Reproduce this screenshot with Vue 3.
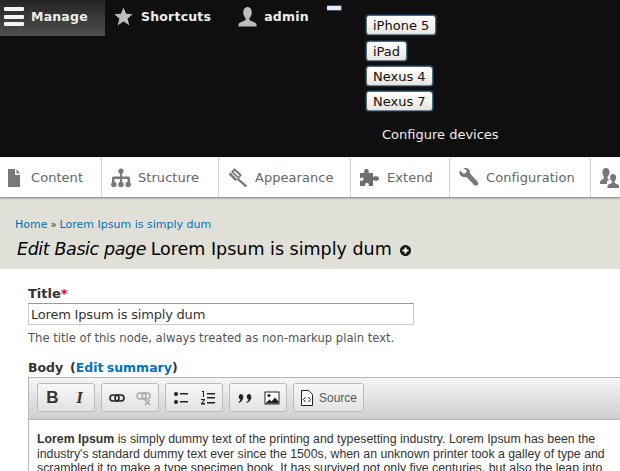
<script setup>
const devices = ['iPhone 5', 'iPad', 'Nexus 4', 'Nexus 7']
const tabs = [
  { label: 'Content', icon: 'content', width: 102 },
  { label: 'Structure', icon: 'structure', width: 117 },
  { label: 'Appearance', icon: 'appearance', width: 132 },
  { label: 'Extend', icon: 'extend', width: 99 },
  { label: 'Configuration', icon: 'config', width: 141 },
]
</script>

<template>
  <div class="page">
    <header class="topbar">
      <div class="bar-row">
        <a class="bar-item manage">
          <span class="burger"><i></i><i></i><i></i></span>
          Manage
        </a>
        <a class="bar-item shortcuts">
          <svg width="19" height="19" viewBox="0 0 20 20"><path fill="#bdbdbd" d="M10 .5l2.700 6.600 7 .5-5.400 4.500 1.800 7L10 15.300l-6.100 3.800 1.800-7L.3 7.600l7-.5z"/></svg>
          Shortcuts
        </a>
        <a class="bar-item admin">
          <svg width="19" height="20" viewBox="0 0 20 21"><path fill="#bdbdbd" d="M10 0c3 0 4.500 2.300 4.500 5.500 0 2.800-1.200 5-2.500 6.200v1.800c0 1 6 2.300 7.500 4.500v2.500H.5v-2.500c1.500-2.200 7.500-3.500 7.500-4.500v-1.800C6.700 10.500 5.500 8.300 5.500 5.500 5.500 2.300 7 0 10 0z"/></svg>
          admin
        </a>
        <span class="mini-btn"></span>
      </div>
      <div class="devices">
        <button v-for="d in devices" :key="d" class="device">{{ d }}</button>
        <a class="configure">Configure devices</a>
      </div>
    </header>

    <nav class="tabs">
      <a v-for="t in tabs" :key="t.label" class="tab" :class="'tab-' + t.icon" :style="{ width: t.width + 'px' }">
        <svg class="tab-icon" width="20" height="20" viewBox="0 0 20 20">
          <path v-if="t.icon === 'content'" fill="#787878" d="M4 1h7v6h5v12H4zM12.500 1l3.500 4.500h-3.500z"/>
          <g v-else-if="t.icon === 'structure'" fill="#787878">
            <circle cx="10" cy="3" r="2.600"/><circle cx="2.800" cy="16.500" r="2.700"/><circle cx="10" cy="16.500" r="2.700"/><circle cx="17.200" cy="16.500" r="2.700"/>
            <path d="M9 5h2v3.500h6.500A1.500 1.500 0 0 1 19 10v5h-2.500v-4H11v4H9v-4H3.500v4H1v-5a1.500 1.500 0 0 1 1.500-1.500H9z"/>
          </g>
          <g v-else-if="t.icon === 'appearance'" fill="#787878">
            <path d="M6.500 0L14 7l-3.500 4L3 4zM5.500 4l5 4.700 1-1.200-5-4.700z" fill-rule="evenodd"/>
            <path d="M2.500 4.500l7 7-2 1.500L.5 6.500zM10.500 10l8.500 7.500-1.500 1.700-8.500-7.500z"/>
          </g>
          <path v-else-if="t.icon === 'extend'" fill="#6e6e6e" d="M0 5h4.500C4 3.500 4 1 6.500 1S9 3.500 8.500 5H13v4c1.500-1.200 6-1.500 6 1.500S14.500 13.200 13 12v6H8.500c.8-1.500.5-3-1.500-3s-2.300 1.500-1.500 3H0v-5.500c1.500.8 3.500.5 3.500-1.500S1.500 9.300 0 10z"/>
          <path v-else-if="t.icon === 'config'" fill="#787878" d="M1 2.500l3.500 3.300 2.500-.8.800-2.500L4.500.2C8-1 11.500 1.500 11 5.500l7.500 8c1 1 1 2.500 0 3.500s-2.500 1-3.500 0L7.500 9C4 10-1.500 7 1 2.500z"/>
        </svg>
        {{ t.label }}
      </a>
      <a class="tab last">
        <svg width="20" height="20" viewBox="0 0 20 20"><path fill="#787878" d="M6 0c2.500 0 3.500 2 3.500 4S8.500 8 7.500 9v1.500l2 1L7 13v3H0v-2.500c1-1.500 4-2.500 4-3.500V9C3 8 2.500 6 2.500 4S3.500 0 6 0zM13 6c2.200 0 3.200 1.800 3.200 3.500s-.9 3.300-1.700 4v1c0 .8 3.500 1.500 4.500 3V20H7.500v-2.500c1-1.500 4.500-2.200 4.500-3v-1c-1-.7-2-2.300-2-4S11 6 13 6z"/></svg>
      </a>
    </nav>

    <section class="head">
      <div class="crumbs"><a>Home</a><span class="sep">»</span><a>Lorem Ipsum is simply dum</a></div>
      <h1><em>Edit Basic page</em> Lorem Ipsum is simply dum
        <svg class="plus" width="11" height="11" viewBox="0 0 11 11"><circle cx="5.500" cy="5.500" r="5.500" fill="#111"/><path fill="#fff" d="M4.500 2.500h2v2h2v2h-2v2h-2v-2h-2v-2h2z"/></svg>
      </h1>
    </section>

    <main class="form">
      <label class="label">Title<span class="req">*</span></label>
      <input class="title-input" value="Lorem Ipsum is simply dum" />
      <p class="help">The title of this node, always treated as non-markup plain text.</p>

      <div class="label body-label">Body &nbsp;(<a>Edit summary</a>)</div>
      <div class="editor">
        <div class="toolbar">
          <div class="group">
            <span class="tool glyph bold">B</span>
            <span class="tool glyph ital">I</span>
          </div>
          <div class="group">
            <span class="tool">
              <svg width="16" height="16" viewBox="0 0 16 16"><rect x="1" y="5" width="9" height="6" rx="3" fill="none" stroke="#222" stroke-width="1.600"/><rect x="6" y="5" width="9" height="6" rx="3" fill="none" stroke="#222" stroke-width="1.600"/></svg>
            </span>
            <span class="tool">
              <svg width="16" height="16" viewBox="0 0 16 16"><g fill="none" stroke="#aaa" stroke-width="1.500"><rect x="1" y="3" width="9" height="6" rx="3"/><rect x="6" y="3" width="8" height="6" rx="3"/><path d="M9 10l5 5M14 10l-5 5"/></g></svg>
            </span>
          </div>
          <div class="group">
            <span class="tool">
              <svg width="16" height="16" viewBox="0 0 16 16" fill="#222"><circle cx="3" cy="4" r="2"/><circle cx="3" cy="12" r="2"/><path d="M7 3h8v1.500H7zM7 11h8v1.500H7z"/></svg>
            </span>
            <span class="tool">
              <svg width="16" height="16" viewBox="0 0 16 16" fill="#222"><path d="M2 1h2v6H3V2H2zM1 9h4v1L2.500 13H5v1.500H1v-1L3.500 10H1zM7 3h8v1.500H7zM7 7h8v1.500H7zM7 12h8v1.500H7z"/></svg>
            </span>
          </div>
          <div class="group">
            <span class="tool">
              <svg width="16" height="16" viewBox="0 0 16 16" fill="#222"><path d="M3.500 4a3 3 0 0 1 2.800 3.500C6 10 4.500 12 2 13l-.5-1c1-.6 1.800-1.400 2-2.500A3 3 0 0 1 3.500 4zM11.500 4a3 3 0 0 1 2.800 3.500C14 10 12.500 12 10 13l-.5-1c1-.6 1.800-1.400 2-2.500a3 3 0 0 1 0-5.500z"/></svg>
            </span>
            <span class="tool">
              <svg width="16" height="16" viewBox="0 0 16 16"><rect x="1" y="2" width="14" height="12" fill="#fff" stroke="#222"/><circle cx="5" cy="5.500" r="1.500" fill="#222"/><path fill="#222" d="M1.500 13.500l4-4 2 2 3.500-4 3.500 4v2z"/></svg>
            </span>
          </div>
          <div class="group">
            <span class="tool source">
              <svg width="14" height="16" viewBox="0 0 14 16"><path fill="#fff" stroke="#222" d="M1.500.5h7l4 4v11h-11z"/><path fill="none" stroke="#222" d="M5.500 7L3.500 9.500l2 2.500M8.500 7l2 2.500-2 2.500"/></svg>
              <span>Source</span>
            </span>
          </div>
        </div>
        <div class="content">
          <p><b>Lorem Ipsum</b> is simply dummy text of the printing and typesetting industry. Lorem Ipsum has been the industry's standard dummy text ever since the 1500s, when an unknown printer took a galley of type and scrambled it to make a type specimen book. It has survived not only five centuries, but also the leap into electronic typesetting, remaining essentially unchanged.</p>
        </div>
      </div>
    </main>
  </div>
</template>

<style>
html, body {
  margin: 0;
  overflow: hidden;
  background: #fff;
}
</style>

<style scoped>
.page {
  width: 620px;
  height: 471px;
  overflow: hidden;
  font-family: "DejaVu Sans", sans-serif;
  color: #222;
  font-size: 13px;
}

.topbar {
  background: #0f0f0f;
  height: 157px;
  display: flex;
  color: #fff;
}
.bar-row {
  display: flex;
  align-items: flex-start;
  width: 366px;
  flex: none;
}
.bar-item {
  display: flex;
  align-items: center;
  box-sizing: border-box;
  height: 36px;
  padding-bottom: 3px;
  font-size: 12.500px;
  font-weight: bold;
  letter-spacing: 0.2px;
  color: #eee;
}
.manage {
  width: 105px;
  padding-left: 4px;
  gap: 7px;
  background: linear-gradient(#242424, #4f4f4f);
}
.burger {
  width: 20px;
  display: flex;
  flex-direction: column;
  gap: 3.500px;
}
.burger i {
  height: 4px;
  background: #f4f4f4;
  border-radius: 1px;
}
.shortcuts {
  margin-left: 9px;
  gap: 8px;
}
.admin {
  margin-left: 27px;
  gap: 7px;
}
.mini-btn {
  width: 14px;
  height: 4px;
  margin: 5px 0 0 18px;
  background: #e8eef4;
  border: 1px solid #36597a;
  border-width: 1px 1px 1px 0;
}
.devices {
  padding-top: 15px;
  display: flex;
  flex-direction: column;
  align-items: flex-start;
}
.device {
  height: 20px;
  padding: 0 6px;
  margin-bottom: 5px;
  font: 13px "DejaVu Sans", sans-serif;
  color: #111;
  background: linear-gradient(#fff, #e8e6e0);
  border: 1px solid #4a6a86;
  border-bottom-color: #6d8092;
  border-radius: 3px;
  box-shadow: 0 0 0 1px #1c2c3a;
}
.device:first-child {
  margin-bottom: 6px;
}
.configure {
  margin: 11px 0 0 16px;
  font-size: 13px;
  color: #eee;
}

.tabs {
  display: flex;
  height: 39px;
  margin-top: 1px;
  background: #fff;
  box-shadow: 0 1px 2px #777;
  position: relative;
}
.tab {
  display: flex;
  align-items: center;
  flex: none;
  box-sizing: border-box;
  height: 39px;
  padding-left: 9px;
  gap: 7px;
  border-right: 1px solid #d4d4d4;
  color: #666;
  font-size: 13px;
  letter-spacing: 0.05px;
}
.tab-icon {
  flex: none;
}
.tab-content {
  padding-left: 4px;
}
.last {
  border: 0;
  padding-left: 9px;
}

.head {
  background: #e0e0d8;
  height: 72px;
  box-sizing: border-box;
  padding: 19px 0 0 15px;
}
.crumbs {
  font-size: 11px;
  line-height: 14px;
  margin-top: 2px;
  color: #333;
}
.crumbs a {
  color: #0074bd;
}
.sep {
  font-size: 10px;
  margin: 0 3px;
}
h1 {
  margin: 5px 0 0 2px;
  font-size: 17.500px;
  line-height: 24px;
  font-weight: normal;
  color: #000;
  white-space: nowrap;
}
h1 em {
  letter-spacing: -0.400px;
  margin-right: -1px;
}
.plus {
  margin-left: 3px;
  vertical-align: -1px;
}

.form {
  padding: 17px 0 0 28px;
}
.label {
  display: block;
  font-size: 13px;
  line-height: 16px;
  font-weight: bold;
  color: #333;
}
.req {
  color: #e00;
}
.title-input {
  display: block;
  box-sizing: border-box;
  width: 386px;
  height: 22px;
  margin-top: 1px;
  padding: 0 2px;
  border: 1px solid #ccc;
  border-top-color: #999;
  font: 13px "DejaVu Sans", sans-serif;
  letter-spacing: -0.200px;
  color: #333;
  outline: none;
}
.help {
  margin: 5px 0 0;
  font-size: 11.600px;
  line-height: 16px;
  color: #555;
}
.body-label {
  margin-top: 14px;
  font-size: 12.500px;
  word-spacing: -1px;
}
.body-label a {
  color: #0074bd;
}

.editor {
  width: 640px;
  margin-top: 1px;
  border: 1px solid #b6b6b6;
  border-right: 0;
}
.toolbar {
  display: flex;
  gap: 6px;
  height: 42px;
  box-sizing: border-box;
  padding: 5px 8px;
  background: linear-gradient(#f5f5f5, #cfcfcf);
  border-bottom: 1px solid #b6b6b6;
}
.group {
  display: flex;
  height: 27px;
  padding: 0 1px;
  border: 1px solid #bcbcbc;
  border-radius: 3px;
  background: linear-gradient(#f8f8f8, #e2e2e2);
}
.tool {
  width: 27px;
  height: 27px;
  display: flex;
  align-items: center;
  justify-content: center;
}
.glyph {
  font-family: "Liberation Serif", serif;
  font-size: 17px;
  color: #333;
}
.bold {
  font-family: "Liberation Sans", sans-serif;
  font-weight: bold;
}
.ital {
  font-weight: bold;
  font-style: italic;
}
.source {
  width: auto;
  padding: 0 5px;
  gap: 5px;
  font: 12px "Liberation Sans", sans-serif;
  color: #5a5a5a;
}
.content {
  background: #fff;
  box-sizing: border-box;
  padding: 12px 8px;
  width: 590px;
  font: 12.300px/14.500px "Liberation Sans", Arial, sans-serif;
  color: #333;
}
.content p {
  margin: 0;
}
</style>
